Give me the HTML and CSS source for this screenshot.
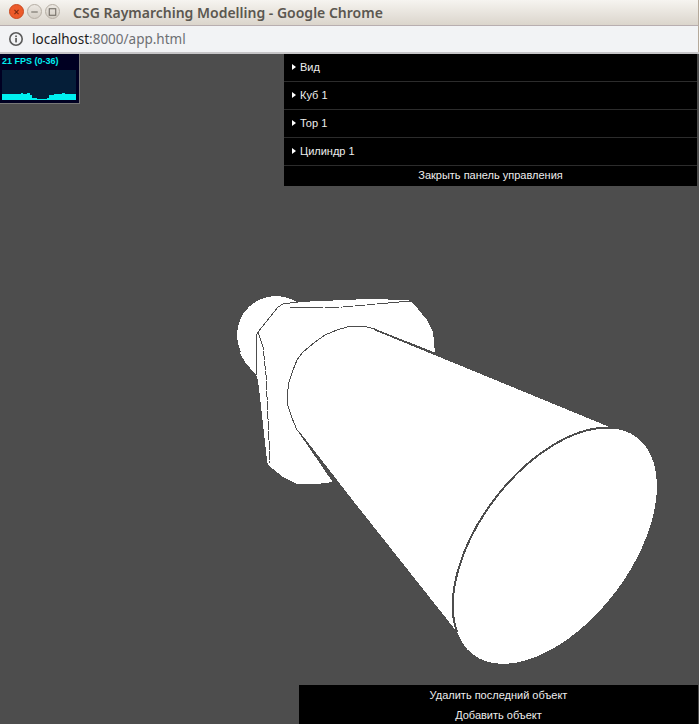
FILE: index.html
```html
<!DOCTYPE html>
<html lang="ru">
<head>
<meta charset="utf-8">
<title>CSG Raymarching Modelling</title>
<link rel="stylesheet" href="styles.css">
</head>
<body>
<div class="window">
  <header class="titlebar">
    <div class="winbtns">
      <span class="winbtn close"><svg width="14" height="14" viewBox="0 0 14 14"><path d="M4.8 4.8l4.4 4.4M9.2 4.8l-4.4 4.4" stroke="#7a2a10" stroke-width="1.1" fill="none"/></svg></span>
      <span class="winbtn"><svg width="14" height="14" viewBox="0 0 14 14"><path d="M3.5 7h7" stroke="#6b665f" stroke-width="1.1" fill="none"/></svg></span>
      <span class="winbtn"><svg width="14" height="14" viewBox="0 0 14 14"><rect x="3.5" y="3.5" width="7" height="7" stroke="#6b665f" stroke-width="1.1" fill="none"/></svg></span>
    </div>
    <div class="wintitle">CSG Raymarching Modelling - Google Chrome</div>
  </header>
  <div class="urlbar">
    <svg class="infoicon" width="16" height="16" viewBox="0 0 16 16"><circle cx="8" cy="8" r="6.2" stroke="#5a5a5a" stroke-width="1.6" fill="none"/><rect x="7.2" y="7" width="1.7" height="4.4" fill="#5a5a5a"/><rect x="7.2" y="4.5" width="1.7" height="1.6" fill="#5a5a5a"/></svg>
    <span class="url"><span class="host">localhost</span>:8000/app.html</span>
  </div>
  <main class="stage">
    <svg class="scene" width="699" height="670" viewBox="0 54 699 670">
      <circle class="solid" cx="276" cy="335" r="39"/>
      <path class="solid" d="M298 302 L367 299 L408 300 L413 303 L427 320 L433 332 L435 353 L437 356 L612 428 L557 546 L457 632 L343 488 L333 482 L317 484 L297 484 L283 477 L268 465 L267 460 L258 380 L256 375 L245 362 L240 353 L270 320 Z"/>
      <ellipse class="solid" cx="555" cy="546" rx="136" ry="76" transform="rotate(-53 555 546)"/>
      <path class="ink" d="M256 345 L256 336 L258 332 L278 307 L283 304 L298 302"/>
      <path class="ink" d="M256 345 L257 375"/>
      <path class="ink dash" d="M258 332 L263 347 L266 375 L267 397 L270 463"/>
      <path class="ink dash-long" d="M290 308 L343 307 L410 301"/>
      <path class="ink" d="M375 329 L367 327 L358 326 L347 327 L337 330 L325 335 L315 342 L303 352 L297 360 L293 370 L289 382 L287 397 L288 406 L292 418 L297 430"/>
      <path class="solid-ink" d="M373 328 L436 353 L437 356 L375 330.5 Z"/>
      <path class="solid-ink" d="M297 430 L299 431 L344 489 L333 482.5 Z"/>
      <path class="ink thick" d="M457 632 A136 76 -53 0 1 612 428"/>
    </svg>

    <section class="stats">
      <div class="stats-label">21 FPS (0-36)</div>
      <svg class="stats-graph" width="74" height="30" viewBox="0 0 74 30">
        <path class="graph-bar" d="M0 24H19V23H21V24H25V23H28V25H30V30H0Z M30 28H35V30H30Z M35 29H37V30H35Z M37 29H45V30H37Z M45 30V28H47V25H52V24H60V23H63V24H74V30Z"/>
      </svg>
    </section>

    <nav class="gui">
      <div class="gui-row"><span class="arrow"></span>Вид</div>
      <div class="gui-row"><span class="arrow"></span>Куб 1</div>
      <div class="gui-row"><span class="arrow"></span>Тор 1</div>
      <div class="gui-row"><span class="arrow"></span>Цилиндр 1</div>
      <div class="gui-close">Закрыть панель управления</div>
    </nav>

    <div class="actions">
      <div class="action">Удалить последний объект</div>
      <div class="action">Добавить объект</div>
    </div>
  </main>
</div>
</body>
</html>
```
FILE: styles.css
```css
* { box-sizing: border-box; }
html, body { margin: 0; height: 100%; overflow: hidden; background: #4d4d4d; }
.window { width: 699px; height: 724px; display: flex; flex-direction: column; }

.titlebar {
  height: 26px;
  display: flex;
  align-items: center;
  background: linear-gradient(#f6f4f0, #dbd5cc);
  border-bottom: 1px solid #b8aeb0;
  border-right: 1px solid #b5a99a;
}
.winbtns { display: flex; gap: 3px; margin-left: 9px; width: 64px; margin-top: -2px; }
.winbtn {
  width: 15px; height: 15px; border-radius: 50%;
  display: flex; align-items: center; justify-content: center;
  background: linear-gradient(#ece8e2, #d3cdc4);
  border: 1px solid #b5aea4;
}
.winbtn.close { background: #ec5a2a; border-color: #c9481f; }
.wintitle {
  font: 600 14px "Noto Sans", sans-serif;
  color: #5b5750;
  white-space: nowrap;
  margin-top: -1px;
}

.urlbar {
  height: 26px;
  display: flex;
  align-items: center;
  background: #f2f3f5;
  border-right: 1px solid #b5a99a;
  padding-left: 8px;
  gap: 8px;
}
.infoicon { flex: none; }
.url { font: 13.5px "Noto Sans", sans-serif; color: #6d6f73; white-space: nowrap; }
.host { color: #1c1c1c; }

.stage {
  position: relative;
  flex: 1;
  background: #4d4d4d;
  border-top: 2px solid #c6c5c7;
  overflow: hidden;
}
.scene { display: block; shape-rendering: crispEdges; }
.solid { fill: #fff; }
.solid-ink { fill: #4d4d4d; }
.ink { fill: none; stroke: #4d4d4d; stroke-width: 1; }
.ink.thick { stroke-width: 2; }
.dash { stroke-dasharray: 9 1; }
.dash-long { stroke-dasharray: 33 2 14 2 12 2 10 2 8 2; }

.stats {
  position: absolute; left: 0; top: 0;
  width: 80px; height: 50px;
  background: #000022;
  border-right: 1px solid #777;
  border-bottom: 1px solid #777;
  padding: 2px 2px 0;
}
.stats-label { font: bold 9px/11px "Liberation Sans", sans-serif; color: #00eeee; white-space: nowrap; }
.stats-graph { display: block; margin-top: 3px; background: #051e38; shape-rendering: crispEdges; }
.graph-bar { fill: #00f0f0; }

.gui {
  position: absolute; left: 284px; top: 0;
  width: 413px;
  background: #000;
  font: 11px "Liberation Sans", sans-serif;
  color: #eee;
}
.gui-row {
  height: 28px;
  display: flex;
  align-items: center;
  padding-left: 8px;
  padding-bottom: 2px;
  border-bottom: 1px solid #2c2c2c;
}
.arrow {
  width: 0; height: 0; margin-right: 4px;
  border-left: 4px solid #fff;
  border-top: 3px solid transparent;
  border-bottom: 3px solid transparent;
}
.gui-close { height: 20px; line-height: 18px; text-align: center; }

.actions {
  position: absolute; left: 299px; bottom: 0;
  width: 399px;
  height: 39px;
  overflow: hidden;
  background: #000;
  font: 11px "Liberation Sans", sans-serif;
  color: #eee;
}
.action { height: 20px; line-height: 20px; text-align: center; }
```
